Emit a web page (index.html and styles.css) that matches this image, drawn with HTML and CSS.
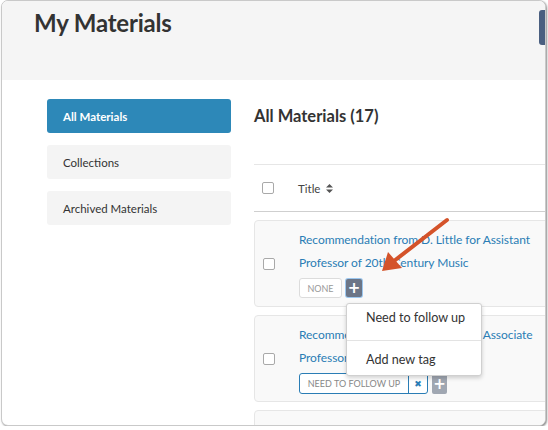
FILE: index.html
```html
<!DOCTYPE html>
<html>
<head>
<meta charset="utf-8">
<link rel="stylesheet" href="styles.css">
</head>
<body>
<div class="window">
  <header class="top">
    <h1>My Materials</h1>
    <span class="top-btn"></span>
  </header>
  <div class="content">
    <nav class="side">
      <a class="side-item active">All Materials</a>
      <a class="side-item">Collections</a>
      <a class="side-item">Archived Materials</a>
    </nav>
    <main class="main">
      <h2>All Materials (17)</h2>
      <div class="rule"></div>
      <div class="thead">
        <span class="check"></span>
        <span class="th-title">Title</span>
        <svg class="sort" width="7" height="9" viewBox="0 0 7 9"><path d="M3.5 0 L7 3.5 H0 Z M3.5 9 L7 5.5 H0 Z" fill="#555"/></svg>
      </div>
      <div class="card">
        <span class="check"></span>
        <div class="card-body">
          <a class="link">Recommendation from D. Little for Assistant</a>
          <a class="link">Professor of 20th Century Music</a>
          <div class="tags">
            <span class="tag">NONE</span>
            <span class="plus focus">+</span>
          </div>
        </div>
      </div>
      <div class="card">
        <span class="check"></span>
        <div class="card-body">
          <a class="link">Recommendation from D. Little for Associate</a>
          <a class="link">Professor of 20th Century Music</a>
          <div class="tags">
            <span class="tag tag-on"><span class="tag-text">NEED TO FOLLOW UP</span><span class="tag-x">✖</span></span>
            <span class="plus light">+</span>
          </div>
        </div>
      </div>
      <div class="card"></div>
    </main>
  </div>
  <div class="dropdown">
    <div class="dd-item">Need to follow up</div>
    <div class="dd-sep"></div>
    <div class="dd-item">Add new tag</div>
  </div>
  <svg class="arrow" width="100" height="80" viewBox="0 0 100 80">
    <line x1="83" y1="4" x2="30" y2="45" stroke="#d4532a" stroke-width="4" stroke-linecap="round"/>
    <path d="M18 55 L24 36 L38 52 Z" fill="#d4532a"/>
  </svg>
</div>
</body>
</html>
```
FILE: styles.css
```css
* { box-sizing: border-box; }
html, body { margin: 0; padding: 0; background: #fff; }
body { font-family: "Lato", "Liberation Sans", sans-serif; color: #333; }

.window {
  position: relative;
  width: 545px;
  height: 426px;
  margin-left: 1px;
  border: 1px solid #c9c9c9;
  border-radius: 7px;
  box-shadow: 1px 1px 2px rgba(0,0,0,0.45);
  overflow: hidden;
  background: #fff;
}

.top {
  height: 79px;
  background: #f5f5f5;
  padding: 7px 0 0 32px;
  position: relative;
}
.top h1 {
  margin: 0;
  font-size: 24px;
  line-height: 29px;
  font-weight: 700;
  color: #333;
  letter-spacing: -0.2px;
}
.top-btn {
  position: absolute;
  right: -6px;
  top: 9px;
  width: 12px;
  height: 35px;
  background: #4a5f80;
  border-radius: 3px;
}

.content {
  display: flex;
  padding: 19px 0 0 45px;
}
.side {
  width: 184px;
  flex: none;
  display: flex;
  flex-direction: column;
  gap: 12px;
}
.side-item {
  display: block;
  height: 34px;
  line-height: 35px;
  padding-left: 16px;
  background: #f4f4f4;
  border-radius: 3px;
  font-size: 11.5px;
  color: #333;
}
.side-item.active {
  background: #2d88b8;
  color: #fff;
  font-weight: 700;
}

.main {
  margin-left: 23px;
  flex: 1;
  min-width: 0;
}
.main h2 {
  margin: 7px 0 0 0;
  font-size: 16.5px;
  line-height: 20px;
  font-weight: 700;
  color: #333;
}
.rule {
  margin-top: 38px;
  height: 1px;
  background: #e6e6e6;
  width: 320px;
}
.thead {
  height: 47px;
  display: flex;
  align-items: center;
  padding-left: 8px;
  border-bottom: 1px solid #cfcfcf;
  width: 320px;
}
.check {
  width: 12px;
  height: 12px;
  border: 1px solid #a9a9a9;
  border-radius: 2px;
  background: #fff;
  flex: none;
}
.th-title {
  margin-left: 24px;
  font-size: 11.5px;
  color: #444;
}
.sort { margin-left: 6px; }

.card {
  margin-top: 8px;
  width: 330px;
  height: 87px;
  background: #f9f9f9;
  border: 1px solid #e6e6e6;
  border-radius: 4px;
  display: flex;
  align-items: center;
  padding-left: 8px;
}
.card-body {
  margin-left: 24px;
  display: flex;
  flex-direction: column;
  align-self: flex-start;
  padding-top: 7px;
}
.link {
  display: block;
  font-size: 12px;
  line-height: 23px;
  color: #2a7db5;
  white-space: nowrap;
  letter-spacing: -0.05px;
}
.tags {
  display: flex;
  align-items: center;
  gap: 4px;
  margin-top: 4px;
}
.tag {
  height: 20px;
  width: 43px;
  border: 1px solid #dcdcdc;
  border-radius: 3px;
  background: #fff;
  font-size: 9px;
  color: #999;
  display: flex;
  align-items: center;
  justify-content: center;
}
.tag.tag-on {
  width: 129px;
  height: 21px;
  border-color: #2a7db5;
  justify-content: flex-start;
  color: #888;
}
.tag-text {
  width: 109px;
  text-align: center;
  border-right: 1px solid #2a7db5;
  height: 100%;
  line-height: 19px;
}
.tag-x {
  flex: 1;
  text-align: center;
  color: #2a7db5;
  font-size: 9px;
  font-family: "DejaVu Sans", sans-serif;
}
.plus {
  width: 16px;
  height: 18px;
  border-radius: 2px;
  background: #6b7587;
  color: #fff;
  font-weight: 700;
  font-size: 15px;
  line-height: 18px;
  text-align: center;
  font-family: "DejaVu Sans", sans-serif;
}
.plus.focus { box-shadow: 0 0 0 1px #9cc7ef; }
.plus.light { background: #a0a7b2; width: 15px; height: 20px; line-height: 20px; }

.dropdown {
  position: absolute;
  left: 344px;
  top: 302px;
  width: 136px;
  height: 73px;
  background: #fff;
  border: 1px solid #d0d0d0;
  border-radius: 3px;
  box-shadow: 0 2px 4px rgba(0,0,0,0.18);
}
.dd-item {
  height: 36px;
  line-height: 28px;
  padding-left: 19px;
  font-size: 12.6px;
  color: #333;
}
.dd-item + .dd-sep + .dd-item { line-height: 38px; }
.dd-sep { height: 1px; background: #e3e3e3; }

.arrow {
  position: absolute;
  left: 362px;
  top: 215px;
}
```
